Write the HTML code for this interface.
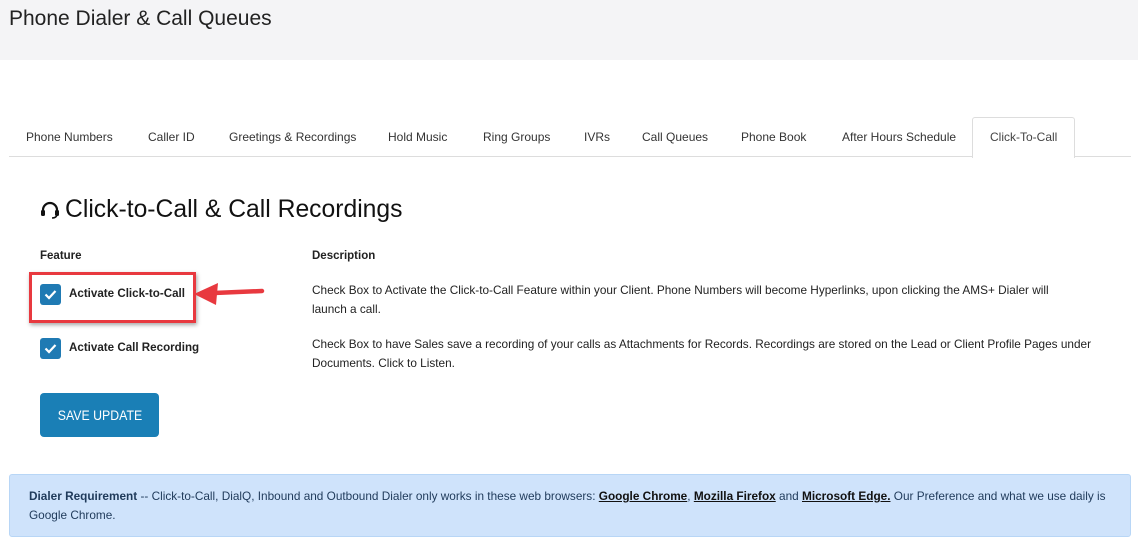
<!DOCTYPE html><html><head><style>
body{margin:0;width:1138px;height:547px;background:#fff;font-family:"Liberation Sans",sans-serif;color:#222;position:relative;overflow:hidden}
.a{position:absolute;white-space:nowrap}
.hdr{position:absolute;left:0;top:0;width:1138px;height:60px;background:#f4f4f6}
.tab{position:absolute;top:130px;font-size:12px;color:#333}
.cb{position:absolute;width:21px;height:21px;background:#1f7ab3;border-radius:3px}
.cb svg{position:absolute;left:4px;top:5px}
.d{font-size:11.8px;color:#222;line-height:19px}
</style></head><body>
<div class="hdr"></div>
<div class="a" style="left:9px;top:7px;font-size:21px;color:#222">Phone Dialer &amp; Call Queues</div>
<div class="a" style="left:9px;top:156px;width:1122px;height:1px;background:#ddd"></div>
<div class="a" style="left:972px;top:117px;width:101px;height:40px;background:#fff;border:1px solid #ddd;border-bottom:none;border-radius:3px 3px 0 0"></div>
<div class="tab" style="left:26px">Phone Numbers</div>
<div class="tab" style="left:148px">Caller ID</div>
<div class="tab" style="left:229px">Greetings &amp; Recordings</div>
<div class="tab" style="left:388px">Hold Music</div>
<div class="tab" style="left:483px">Ring Groups</div>
<div class="tab" style="left:584px">IVRs</div>
<div class="tab" style="left:642px">Call Queues</div>
<div class="tab" style="left:741px">Phone Book</div>
<div class="tab" style="left:842px">After Hours Schedule</div>
<div class="tab" style="left:990px;color:#444">Click-To-Call</div>
<svg class="a" style="left:40px;top:201px" width="20" height="18" viewBox="0 0 20 18"><path d="M3 11V9a7 7 0 0 1 14 0v2" fill="none" stroke="#111" stroke-width="2.2"/><rect x="1" y="9" width="4" height="6" rx="1.5" fill="#111"/><rect x="15" y="9" width="4" height="6" rx="1.5" fill="#111"/><path d="M17 14q-1 3-5 3" fill="none" stroke="#111" stroke-width="1.6"/></svg>
<div class="a" style="left:65px;top:196px;font-size:24.7px;color:#111">Click-to-Call &amp; Call Recordings</div>
<div class="a" style="left:40px;top:250px;font-size:11.5px;font-weight:bold">Feature</div>
<div class="a" style="left:312px;top:250px;font-size:11.5px;font-weight:bold">Description</div>
<div class="a" style="left:29px;top:272px;width:161px;height:45px;border:3px solid #e8393f;box-shadow:1px 2px 4px rgba(0,0,0,.35)"></div>
<div class="cb" style="left:40px;top:284px"><svg width="13" height="11" viewBox="0 0 13 11"><path d="M1.5 5.5l3.5 3.5 6.5-7" fill="none" stroke="#fff" stroke-width="2.2"/></svg></div>
<div class="a" style="left:69px;top:287px;font-size:11.6px;font-weight:bold">Activate Click-to-Call</div>
<svg class="a" style="left:192px;top:279px" width="74" height="28" viewBox="0 0 74 28"><path d="M70 12 L22 14" stroke="#e8393f" stroke-width="4.5" stroke-linecap="round"/><path d="M2 15 L26 4 L24 26 Z" fill="#e8393f"/></svg>
<div class="cb" style="left:40px;top:338px"><svg width="13" height="11" viewBox="0 0 13 11"><path d="M1.5 5.5l3.5 3.5 6.5-7" fill="none" stroke="#fff" stroke-width="2.2"/></svg></div>
<div class="a" style="left:69px;top:341px;font-size:11.6px;font-weight:bold">Activate Call Recording</div>
<div class="a d" style="left:312px;top:281px">Check Box to Activate the Click-to-Call Feature within your Client. Phone Numbers will become Hyperlinks, upon clicking the AMS+ Dialer will<br>launch a call.</div>
<div class="a d" style="left:312px;top:335px">Check Box to have Sales save a recording of your calls as Attachments for Records. Recordings are stored on the Lead or Client Profile Pages under<br>Documents. Click to Listen.</div>
<div class="a" style="left:40px;top:393px;width:119px;height:44px;background:#1a7fb6;border-radius:4px;color:#fff;font-size:14px;text-align:center;line-height:44px"><span style="display:inline-block;transform:scaleX(.88)">SAVE UPDATE</span></div>
<div class="a" style="left:9px;top:474px;width:1120px;height:61px;background:#cfe3fb;border:1px solid #b8d6f6;border-radius:3px"></div>
<div class="a d" style="left:29px;top:487px;color:#1f3a5a;font-size:11.8px"><b>Dialer Requirement</b> -- Click-to-Call, DialQ, Inbound and Outbound Dialer only works in these web browsers: <b style="text-decoration:underline;color:#111">Google Chrome</b>, <b style="text-decoration:underline;color:#111">Mozilla Firefox</b> and <b style="text-decoration:underline;color:#111">Microsoft Edge.</b> Our Preference and what we use daily is<br>Google Chrome.</div>
</body></html>
